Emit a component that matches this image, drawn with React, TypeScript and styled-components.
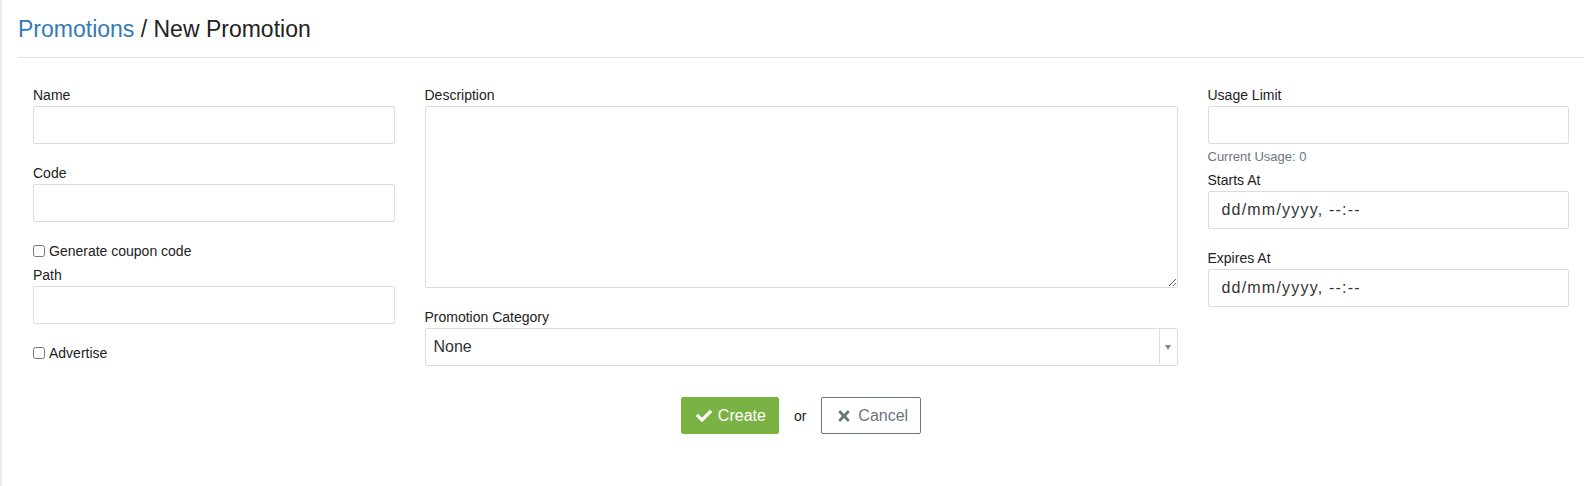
import React from "react";
import styled, { createGlobalStyle } from "styled-components";
import { FaCheck, FaTimes } from "react-icons/fa";

const GlobalStyle = createGlobalStyle`
  html, body {
    margin: 0;
    padding: 0;
    background: #ffffff;
  }
  body {
    font-family: "Liberation Sans", Arial, Helvetica, sans-serif;
    color: #222222;
    -webkit-font-smoothing: antialiased;
  }
  * { box-sizing: border-box; }
`;

const Main = styled.main`
  min-height: 100vh;
  border-left: 2px solid #eceef1;
  padding: 0 12px 0 16px;
`;

const PageHeader = styled.h1`
  margin: 0;
  padding: 14px 0 13px;
  font-size: 23px;
  line-height: 30px;
  font-weight: 400;
  color: #222222;
  border-bottom: 1px solid #e2e2e2;
`;

const Crumb = styled.a`
  color: #337ab7;
  text-decoration: none;
`;

const FormGrid = styled.form`
  display: grid;
  grid-template-columns: 25% 50% 25%;
  margin-top: 27px;
`;

const Column = styled.div`
  display: flex;
  flex-direction: column;
  padding: 0 15px;
`;

const FormGroup = styled.div<{ $mb?: number }>`
  display: flex;
  flex-direction: column;
  margin-bottom: ${(p) => (p.$mb ?? 19)}px;
`;

const Label = styled.label`
  display: block;
  font-size: 14px;
  line-height: 20px;
  margin-bottom: 1px;
  color: #222222;
`;

const TextInput = styled.input`
  width: 100%;
  height: 38px;
  border: 1px solid #dddddd;
  border-radius: 2px;
  padding: 0 13px;
  font-family: inherit;
  font-size: 16px;
  color: #333333;
  background: #ffffff;
  outline: none;

  &::placeholder {
    color: #333333;
    letter-spacing: 1.2px;
  }
`;

const TextArea = styled.textarea`
  width: 100%;
  height: 182px;
  border: 1px solid #dddddd;
  border-radius: 2px;
  padding: 8px 12px;
  font-family: inherit;
  font-size: 16px;
  color: #333333;
  outline: none;
  resize: vertical;
  display: block;
`;

const SelectBox = styled.div`
  display: flex;
  align-items: stretch;
  height: 38px;
  border: 1px solid #dddddd;
  border-radius: 2px;
  background: #ffffff;
`;

const SelectValue = styled.span`
  flex: 1;
  display: flex;
  align-items: center;
  padding-left: 8px;
  font-size: 16px;
  color: #333333;
`;

const SelectArrow = styled.span`
  width: 18px;
  border-left: 1px solid #dddddd;
  display: flex;
  align-items: center;
  justify-content: center;

  &::after {
    content: "";
    display: block;
    border-left: 3.5px solid transparent;
    border-right: 3.5px solid transparent;
    border-top: 5px solid #888888;
  }
`;

const CheckRow = styled.label<{ $mb?: number }>`
  display: flex;
  align-items: center;
  height: 20px;
  font-size: 14px;
  color: #222222;
  margin-bottom: ${(p) => (p.$mb ?? 0)}px;
`;

const CheckBox = styled.input`
  width: 12px;
  height: 12px;
  margin: 0 4px 0 0;
`;

const HelpText = styled.small`
  display: block;
  font-size: 13px;
  line-height: 18px;
  color: #6c757d;
  margin: 4px 0 4px;
`;

const Actions = styled.div`
  display: flex;
  justify-content: center;
  align-items: center;
  gap: 15px;
  margin-top: 31px;
`;

const Button = styled.button<{ $variant: "primary" | "outline" }>`
  display: inline-flex;
  align-items: center;
  gap: 4px;
  height: 37px;
  padding: 0 12px;
  border-radius: 2px;
  font-family: inherit;
  font-size: 16px;
  cursor: pointer;
  border: 1px solid ${(p) => (p.$variant === "primary" ? "#7ab244" : "#6c757d")};
  background: ${(p) => (p.$variant === "primary" ? "#7ab244" : "#ffffff")};
  color: ${(p) => (p.$variant === "primary" ? "#ffffff" : "#6c757d")};
`;

const IconBox = styled.span`
  width: 20px;
  display: inline-flex;
  justify-content: center;
  align-items: center;
`;

const OrText = styled.span`
  font-size: 14px;
  color: #222222;
`;

export default function App() {
  return (
    <>
      <GlobalStyle />
      <Main>
        <PageHeader>
          <Crumb href="#">Promotions</Crumb> / New Promotion
        </PageHeader>
        <FormGrid onSubmit={(e) => e.preventDefault()}>
          <Column>
            <FormGroup>
              <Label>Name</Label>
              <TextInput type="text" />
            </FormGroup>
            <FormGroup>
              <Label>Code</Label>
              <TextInput type="text" />
            </FormGroup>
            <CheckRow $mb={4}>
              <CheckBox type="checkbox" />
              Generate coupon code
            </CheckRow>
            <FormGroup>
              <Label>Path</Label>
              <TextInput type="text" />
            </FormGroup>
            <CheckRow>
              <CheckBox type="checkbox" />
              Advertise
            </CheckRow>
          </Column>
          <Column>
            <FormGroup>
              <Label>Description</Label>
              <TextArea />
            </FormGroup>
            <FormGroup $mb={0}>
              <Label>Promotion Category</Label>
              <SelectBox>
                <SelectValue>None</SelectValue>
                <SelectArrow />
              </SelectBox>
            </FormGroup>
          </Column>
          <Column>
            <FormGroup $mb={0}>
              <Label>Usage Limit</Label>
              <TextInput type="text" />
              <HelpText>Current Usage: 0</HelpText>
            </FormGroup>
            <FormGroup>
              <Label>Starts At</Label>
              <TextInput type="text" placeholder="dd/mm/yyyy, --:--" />
            </FormGroup>
            <FormGroup $mb={0}>
              <Label>Expires At</Label>
              <TextInput type="text" placeholder="dd/mm/yyyy, --:--" />
            </FormGroup>
          </Column>
        </FormGrid>
        <Actions>
          <Button type="button" $variant="primary">
            <IconBox>
              <FaCheck size={16} />
            </IconBox>
            Create
          </Button>
          <OrText>or</OrText>
          <Button type="button" $variant="outline">
            <IconBox>
              <FaTimes size={16} />
            </IconBox>
            Cancel
          </Button>
        </Actions>
      </Main>
    </>
  );
}
